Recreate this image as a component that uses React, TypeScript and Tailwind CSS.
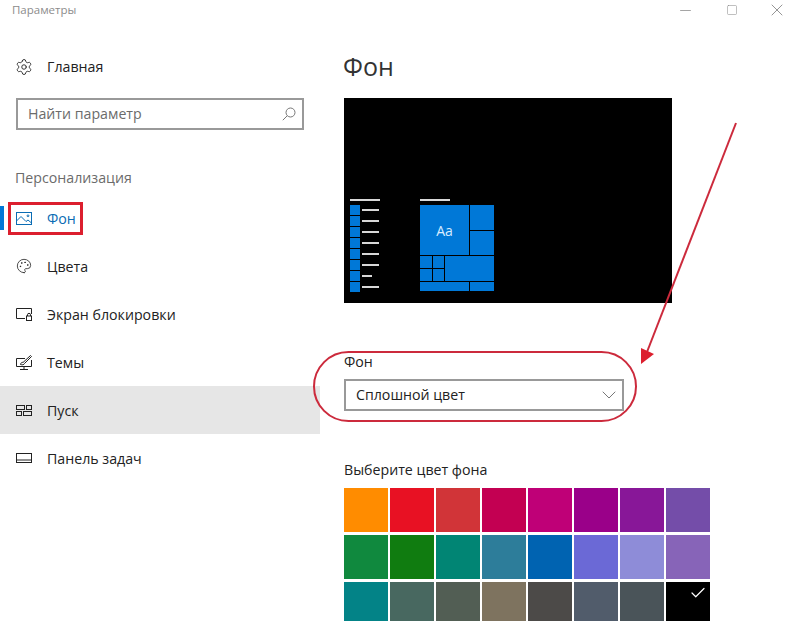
import React from 'react';
import { Settings, Palette, ChevronDown, Minus, Square, X, Check } from 'lucide-react';

const font = 'font-["Open_Sans","Noto_Sans","Liberation_Sans",sans-serif]';

const ImageIcon = () => (
  <svg width="16" height="13" viewBox="0 0 16 13" fill="none" stroke="currentColor" strokeWidth="1">
    <rect x="0.5" y="0.5" width="15" height="12" />
    <path d="M0.5 9 L5 4.5 L10 9.5 L12 8 L15.5 11" />
    <circle cx="12" cy="3.8" r="0.9" />
  </svg>
);

const LockIcon = () => (
  <svg width="16" height="13" viewBox="0 0 16 13" fill="none" stroke="currentColor" strokeWidth="1">
    <path d="M9 10.5 H0.5 V0.5 H15.5 V6" />
    <rect x="10.5" y="8" width="5" height="4.5" />
    <path d="M11.5 8 V6.8 A1.5 1.5 0 0 1 14.5 6.8 V8" />
  </svg>
);

const ThemeIcon = () => (
  <svg width="16" height="15" viewBox="0 0 16 15" fill="none" stroke="currentColor" strokeWidth="1">
    <path d="M9 3.5 H0.5 V11.5 H15.5 V5" />
    <path d="M8 11.5 V14 M4 14.5 H12" />
    <path d="M4.5 9.5 C5 7.5 6 7 7 7.5 L14.5 0.5 L15.5 1.5 L8.5 8.5 C8 10 6 10 4.5 9.5 Z" />
  </svg>
);

const StartIcon = () => (
  <svg width="16" height="11" viewBox="0 0 16 11" fill="none" stroke="currentColor" strokeWidth="1">
    <rect x="0.5" y="0.5" width="8" height="4" />
    <rect x="10.5" y="0.5" width="5" height="4" />
    <rect x="0.5" y="6.5" width="5" height="4" />
    <rect x="7.5" y="6.5" width="8" height="4" />
  </svg>
);

const TaskbarIcon = () => (
  <svg width="16" height="10" viewBox="0 0 16 10" fill="none" stroke="currentColor" strokeWidth="1">
    <rect x="0.5" y="0.5" width="15" height="9" />
    <path d="M0.5 7 H15.5" />
  </svg>
);

const SearchGlyph = () => (
  <svg width="14" height="14" viewBox="0 0 14 14" fill="none" stroke="currentColor" strokeWidth="1">
    <circle cx="8.5" cy="5.5" r="4.5" />
    <path d="M5.2 8.8 L0.8 13.2" />
  </svg>
);

const navItems = [
  { label: 'Фон', icon: <ImageIcon />, active: true },
  { label: 'Цвета', icon: <Palette size={18} strokeWidth={1.2} /> },
  { label: 'Экран блокировки', icon: <LockIcon /> },
  { label: 'Темы', icon: <ThemeIcon /> },
  { label: 'Пуск', icon: <StartIcon />, hover: true },
  { label: 'Панель задач', icon: <TaskbarIcon /> },
];

const swatches = [
  '#ff8c00', '#e81123', '#d13438', '#c30052', '#bf0077', '#9a0089', '#881798', '#744da9',
  '#10893e', '#107c10', '#018574', '#2d7d9a', '#0063b1', '#6b69d6', '#8e8cd8', '#8764b8',
  '#038387', '#486860', '#525e54', '#7e735f', '#4c4a48', '#515c6b', '#4a5459', '#000000',
];

const lineWidths = [17, 17, 17, 17, 17, 17, 10, 17];

function Preview() {
  return (
    <div className="flex h-[205px] w-[328px] bg-black pl-[6px] pt-[101px]">
      <div className="w-[70px]">
        <div className="h-[2px] w-[30px] bg-[#d8d8d8]" />
        <div className="mt-[4px] flex flex-col gap-px">
          {lineWidths.map((w, i) => (
            <div key={i} className="flex h-[10px] items-center gap-[2px]">
              <div className="h-[10px] w-[10px] bg-[#0078d7]" />
              <div className="h-[2px] bg-[#d8d8d8]" style={{ width: w }} />
            </div>
          ))}
        </div>
      </div>
      <div className="w-[74px]">
        <div className="h-[2px] w-[30px] bg-[#d8d8d8]" />
        <div className="mt-[4px] flex flex-col gap-px">
          <div className="flex h-[50px] gap-px">
            <div className={`flex w-[49px] items-center justify-center bg-[#0078d7] text-[14px] text-[#d8ecff] ${font}`}>Aa</div>
            <div className="flex w-[24px] flex-col gap-px">
              <div className="h-[25px] bg-[#0078d7]" />
              <div className="h-[24px] bg-[#0078d7]" />
            </div>
          </div>
          <div className="flex h-[25px] gap-px">
            <div className="grid w-[24px] grid-cols-2 grid-rows-2 gap-px">
              <div className="bg-[#0078d7]" />
              <div className="bg-[#0078d7]" />
              <div className="bg-[#0078d7]" />
              <div className="bg-[#0078d7]" />
            </div>
            <div className="w-[49px] bg-[#0078d7]" />
          </div>
          <div className="flex h-[9px] gap-px">
            <div className="w-[49px] bg-[#0078d7]" />
            <div className="w-[24px] bg-[#0078d7]" />
          </div>
        </div>
      </div>
    </div>
  );
}

export default function App() {
  return (
    <div className={`relative h-[621px] w-[798px] overflow-hidden bg-white text-[14.2px] text-[#222] ${font}`}>
      {/* Title bar */}
      <div className="flex h-[20px] items-center justify-between">
        <span className="pl-[12px] text-[11.5px] text-[#8c8c8c]">Параметры</span>
        <div className="flex items-center pr-[11px] text-[#808080]">
          <Minus size={17} strokeWidth={1} className="mr-[32px]" />
          <Square size={12} strokeWidth={1} className="mr-[29px]" />
          <X size={20} strokeWidth={1} />
        </div>
      </div>

      <div className="flex">
        {/* Sidebar */}
        <aside className="w-[320px] shrink-0">
          <div className="mt-[23px] flex h-[48px] items-center pl-[15px]">
            <Settings size={18} strokeWidth={1.2} />
            <span className="ml-[14px]">Главная</span>
          </div>
          <div className="ml-[16px] mt-[7px] flex h-[32px] w-[288px] items-center justify-between border-2 border-[#999] pl-[10px] pr-[6px] text-[#6b6b6b]">
            <span>Найти параметр</span>
            <div className="text-[#777]">
              <SearchGlyph />
            </div>
          </div>
          <div className="mt-[38px] h-[20px] pl-[15px] leading-[20px] text-[#6b6b6b]">Персонализация</div>
          <nav className="mt-[6px]">
            {navItems.map((item) => (
              <div
                key={item.label}
                className={`relative flex h-[48px] items-center pl-[16px] ${item.hover ? 'bg-[#e6e6e6]' : ''} ${item.active ? 'text-[#0a6cb4]' : ''}`}
              >
                {item.active && <div className="absolute left-0 top-[12px] h-[24px] w-[4px] bg-[#0078d7]" />}
                <div className="flex w-[16px] justify-center">{item.icon}</div>
                <span className="ml-[15px] pt-[2px]">{item.label}</span>
              </div>
            ))}
          </nav>
        </aside>

        {/* Content */}
        <main className="flex-1 pl-[24px]">
          <h1 className="-ml-px mt-[26px] h-[40px] text-[25px] font-normal leading-[40px] text-[#333]">Фон</h1>
          <div className="mt-[12px]">
            <Preview />
          </div>
          <div className="mt-[49px] h-[20px] leading-[20px]">Фон</div>
          <div className="mt-[7px] flex h-[32px] w-[280px] items-center justify-between border-2 border-[#999] pl-[10px] pr-px">
            <span>Сплошной цвет</span>
            <ChevronDown size={24} strokeWidth={1} className="text-[#777]" />
          </div>
          <div className="mt-[49px] h-[20px] leading-[20px]">Выберите цвет фона</div>
          <div className="mt-[8px] grid w-[366px] grid-cols-8 gap-x-[2px] gap-y-[3px]">
            {swatches.map((c) => (
              <div key={c} className="relative h-[44px] w-[44px]" style={{ background: c }}>
                {c === '#000000' && (
                  <Check size={18} strokeWidth={1.6} className="absolute right-[3px] top-[2px] text-white" />
                )}
              </div>
            ))}
          </div>
        </main>
      </div>

      {/* Red annotations */}
      <div className="absolute left-[8px] top-[202px] h-[33px] w-[75px] border-[3px] border-[#dc1f2e]" />
      <div className="absolute left-[313px] top-[351px] h-[71px] w-[324px] rounded-[36px] border-2 border-[#cc2a3c]" />
      <svg className="absolute left-0 top-0" width="798" height="621" fill="none">
        <path d="M736 123 L647 352" stroke="#cc2a3c" strokeWidth="2" />
        <path d="M641 364 L641 348 L654 354 Z" fill="#dc1f2e" />
      </svg>
    </div>
  );
}
